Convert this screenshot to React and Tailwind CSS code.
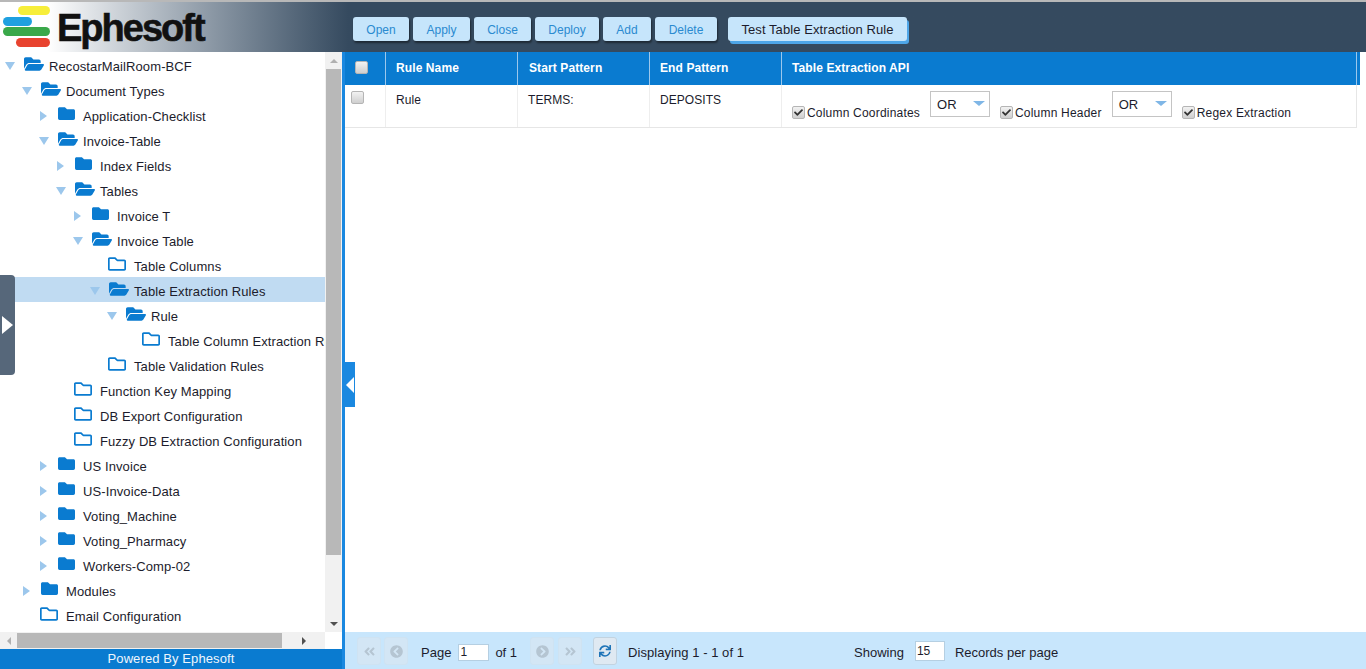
import React from "react";
import {
  FaFolder,
  FaFolderOpen,
  FaRegFolder,
  FaCheck,
  FaSync,
  FaAngleDoubleLeft,
  FaAngleDoubleRight,
  FaChevronCircleLeft,
  FaChevronCircleRight,
} from "react-icons/fa";

const treeRows = [
  { depth: 0, kind: "open", label: "RecostarMailRoom-BCF" },
  { depth: 1, kind: "open", label: "Document Types" },
  { depth: 2, kind: "closed", label: "Application-Checklist" },
  { depth: 2, kind: "open", label: "Invoice-Table" },
  { depth: 3, kind: "closed", label: "Index Fields" },
  { depth: 3, kind: "open", label: "Tables" },
  { depth: 4, kind: "closed", label: "Invoice T" },
  { depth: 4, kind: "open", label: "Invoice Table" },
  { depth: 5, kind: "leaf", label: "Table Columns" },
  { depth: 5, kind: "open", label: "Table Extraction Rules", selected: true },
  { depth: 6, kind: "open", label: "Rule" },
  { depth: 7, kind: "leaf", label: "Table Column Extraction Rules" },
  { depth: 5, kind: "leaf", label: "Table Validation Rules" },
  { depth: 3, kind: "leaf", label: "Function Key Mapping" },
  { depth: 3, kind: "leaf", label: "DB Export Configuration" },
  { depth: 3, kind: "leaf", label: "Fuzzy DB Extraction Configuration" },
  { depth: 2, kind: "closed", label: "US Invoice" },
  { depth: 2, kind: "closed", label: "US-Invoice-Data" },
  { depth: 2, kind: "closed", label: "Voting_Machine" },
  { depth: 2, kind: "closed", label: "Voting_Pharmacy" },
  { depth: 2, kind: "closed", label: "Workers-Comp-02" },
  { depth: 1, kind: "closed", label: "Modules" },
  { depth: 1, kind: "leaf", label: "Email Configuration" },
  { depth: 1, kind: "leaf", label: "" },
];

const toolbarButtons = [
  { label: "Open", width: "w-[56px]" },
  { label: "Apply", width: "w-[57px]" },
  { label: "Close", width: "w-[57px]" },
  { label: "Deploy", width: "w-[64px]" },
  { label: "Add", width: "w-[48px]" },
  { label: "Delete", width: "w-[62px]" },
];

const Checkbox = ({ checked }) => (
  <span className="flex h-[13px] w-[13px] shrink-0 items-center justify-center rounded-[2px] border border-[#b5b5b5] bg-gradient-to-b from-[#f2f2f2] to-[#cfcfcf]">
    {checked && <FaCheck className="text-[9px] text-[#333]" />}
  </span>
);

const OrSelect = () => (
  <span className="flex h-[26px] w-[60px] shrink-0 items-start justify-between border border-[#c4c4c4] bg-white pl-[6px] pr-[4px] pt-[3px] text-[13px]">
    OR
    <span className="mt-[6px] h-0 w-0 border-x-[6px] border-t-[5px] border-x-transparent border-t-[#7fb6e6]" />
  </span>
);

const TreeRow = ({ row }) => (
  <div
    className={`flex h-[25px] items-center whitespace-nowrap pt-[2px] text-[13px] tracking-[0.1px] text-[#1c1c2c] ${row.selected ? "bg-[#c0dbf2]" : ""}`}
    style={{ paddingLeft: 5 + row.depth * 17 }}
  >
    <span className="flex w-[19px] shrink-0 items-center">
      {row.kind === "open" && (
        <span className="h-0 w-0 border-x-[5px] border-t-[8px] border-x-transparent border-t-[#9cc7ec]" />
      )}
      {row.kind === "closed" && (
        <span className="ml-[1px] h-0 w-0 border-y-[5px] border-l-[7px] border-y-transparent border-l-[#9cc7ec]" />
      )}
    </span>
    <span className="mb-[4px] flex w-[25px] shrink-0 items-center text-[#0a7bd0]">
      {row.kind === "open" && <FaFolderOpen className="text-[20px]" />}
      {row.kind === "closed" && <FaFolder className="text-[17px]" />}
      {row.kind === "leaf" && <FaRegFolder className="-ml-[1px] text-[18px]" />}
    </span>
    <span className="pt-[2px]">{row.label}</span>
  </div>
);

const PagerButton = ({ children, faded = true }) => (
  <span
    className={`flex h-[28px] w-[24px] shrink-0 items-center justify-center rounded-[3px] border ${
      faded ? "border-[#cfe3f2] bg-[#d3e6f5] text-[#b5c5d2]" : "border-[#c2d3e0] bg-[#dfe9f2] text-[#1f74b8]"
    }`}
  >
    {children}
  </span>
);

const Triangle = ({ className }) => <span className={`h-0 w-0 ${className}`} />;

export default function App() {
  return (
    <div className="relative flex h-[669px] w-[1366px] flex-col overflow-hidden bg-white font-['Liberation_Sans',Arial,sans-serif] text-[#1c1c2c]">
      {/* Header */}
      <header className="flex h-[52px] shrink-0 items-start border-t-2 border-[#b8b8b8] bg-gradient-to-r from-white from-[3.5%] to-[#354a5f] to-[25.5%]">
        <div className="flex h-full w-[353px] shrink-0 items-start pl-[3px] pt-[3px]">
          <svg width="47" height="43" viewBox="0 0 47 43" className="shrink-0">
            <rect x="15" y="1" width="32" height="9" rx="4.5" fill="#f7ee3a" />
            <rect x="0" y="12" width="29" height="9" rx="4.5" fill="#1fa0e0" />
            <rect x="0" y="22" width="47" height="9" rx="4.5" fill="#3aa84a" />
            <rect x="13" y="33" width="34" height="9" rx="4.5" fill="#e8432f" />
          </svg>
          <span className="ml-[7px] mt-[1px] text-[38px] font-bold leading-[44px] tracking-[-2px] text-[#111] [-webkit-text-stroke:0.6px_#111]">
            Ephesoft
          </span>
        </div>
        <div className="flex items-start gap-1 pt-[15px]">
          {toolbarButtons.map((b) => (
            <button
              key={b.label}
              className={`h-[24px] rounded-[3px] bg-[#c6e5fb] pt-[2px] text-[12px] text-[#2a8ad0] shadow-[1px_2px_2px_rgba(0,0,0,0.45)] ${b.width}`}
            >
              {b.label}
            </button>
          ))}
          <button className="ml-[7px] h-[24px] w-[179px] rounded-[3px] bg-[#c6e5fb] pt-[2px] text-[13px] tracking-[0.08px] text-[#1c1c2c] shadow-[2px_3px_0_#4ea6e8]">
            Test Table Extraction Rule
          </button>
        </div>
      </header>

      <div className="flex min-h-0 flex-1">
        {/* Left tree panel */}
        <aside className="flex w-[342px] shrink-0 flex-col">
          <div className="flex min-h-0 flex-1">
            <div className="min-w-0 flex-1 overflow-hidden">
              {treeRows.map((row, i) => (
                <TreeRow key={i} row={row} />
              ))}
            </div>
            {/* vertical scrollbar */}
            <div className="flex w-[17px] shrink-0 flex-col items-center bg-[#f1f1f1]">
              <div className="flex h-[17px] items-center justify-center">
                <Triangle className="border-x-[4px] border-b-[4px] border-x-transparent border-b-[#b0b0b0]" />
              </div>
              <div className="h-[486px] w-[15px] bg-[#b8b8b8]" />
              <div className="flex flex-1 items-end justify-center pb-[6px]">
                <Triangle className="border-x-[4px] border-t-[4px] border-x-transparent border-t-[#505050]" />
              </div>
            </div>
          </div>
          {/* horizontal scrollbar */}
          <div className="flex h-[17px] shrink-0">
            <div className="flex w-[325px] items-center bg-[#f1f1f1]">
              <div className="flex w-[17px] justify-center">
                <Triangle className="border-y-[4px] border-r-[4px] border-y-transparent border-r-[#b0b0b0]" />
              </div>
              <div className="h-[15px] w-[265px] bg-[#b8b8b8]" />
              <div className="flex flex-1 justify-center">
                <Triangle className="border-y-[4px] border-l-[4px] border-y-transparent border-l-[#505050]" />
              </div>
            </div>
          </div>
          <div className="flex h-[20px] shrink-0 items-center justify-center bg-[#0a7bd0] text-[13px] tracking-[0.1px] text-[#eef6fd]">
            Powered By Ephesoft
          </div>
        </aside>

        {/* Main content */}
        <main className="flex min-w-0 flex-1 flex-col border-l-[3px] border-[#1a88e0]">
          <div className="min-h-0 flex-1">
            <div className="grid h-[33px] w-[1015px] grid-cols-[41px_132px_132px_132px_575px_3px] items-center bg-[#0a7bd0] text-[12px] font-bold tracking-[0.1px] text-white">
              <div className="flex h-full items-center justify-center border-r border-[#9cc7ec] pb-[3px] pr-[8px]">
                <Checkbox />
              </div>
              <div className="flex h-full items-center border-r border-[#9cc7ec] pb-[2px] pl-[10px]">Rule Name</div>
              <div className="flex h-full items-center border-r border-[#9cc7ec] pb-[2px] pl-[11px]">Start Pattern</div>
              <div className="flex h-full items-center border-r border-[#9cc7ec] pb-[2px] pl-[10px]">End Pattern</div>
              <div className="flex h-full items-center border-r border-[#9cc7ec] pb-[2px] pl-[10px]">Table Extraction API</div>
              <div />
            </div>
            <div className="grid h-[43px] w-[1012px] grid-cols-[41px_132px_132px_132px_575px] border-b border-[#e6e6e6] text-[12px] tracking-[0.05px]">
              <div className="border-r border-[#eeeeee] pl-[6px] pt-[6px]">
                <Checkbox />
              </div>
              <div className="border-r border-[#eeeeee] pl-[10px] pt-[6px]">Rule</div>
              <div className="border-r border-[#eeeeee] pl-[10px] pt-[6px]">TERMS:</div>
              <div className="border-r border-[#eeeeee] pl-[10px] pt-[6px]">DEPOSITS</div>
              <div className="flex items-start border-r border-[#e6e6e6] pl-[10px] pt-[6px]">
                <span className="mt-[12px] flex items-center gap-[2px]">
                  <Checkbox checked />
                  <span className="pt-[1px] text-[12px] tracking-[0.2px]">Column Coordinates</span>
                </span>
                <span className="ml-[10px]"><OrSelect /></span>
                <span className="ml-[10px] mt-[12px] flex items-center gap-[2px]">
                  <Checkbox checked />
                  <span className="pt-[1px] text-[12px] tracking-[0.2px]">Column Header</span>
                </span>
                <span className="ml-[10px]"><OrSelect /></span>
                <span className="ml-[10px] mt-[12px] flex items-center gap-[2px]">
                  <Checkbox checked />
                  <span className="pt-[1px] text-[12px] tracking-[0.2px]">Regex Extraction</span>
                </span>
              </div>
            </div>
          </div>

          {/* Pager */}
          <div className="flex h-[37px] shrink-0 items-center bg-[#c8e6fc] pl-[12px] pt-[1px] text-[13px]">
            <PagerButton><FaAngleDoubleLeft className="text-[13px]" /></PagerButton>
            <span className="ml-[3px]"><PagerButton><FaChevronCircleLeft className="text-[13px]" /></PagerButton></span>
            <span className="ml-[13px] pt-[3px]">Page</span>
            <span className="ml-[7px] mt-[2px] flex h-[17px] w-[31px] items-center border border-[#b5cfe2] bg-white pl-[1px] text-[12px]">1</span>
            <span className="ml-[6px] pt-[3px]">of 1</span>
            <span className="ml-[13px]"><PagerButton><FaChevronCircleRight className="text-[13px]" /></PagerButton></span>
            <span className="ml-[4px]"><PagerButton><FaAngleDoubleRight className="text-[13px]" /></PagerButton></span>
            <span className="ml-[11px] flex w-[25px]">
              <PagerButton faded={false}><FaSync className="text-[12px]" /></PagerButton>
            </span>
            <span className="ml-[10px] pt-[3px] tracking-[0.05px]">Displaying 1 - 1 of 1</span>
            <span className="ml-[110px] pt-[3px]">Showing</span>
            <span className="ml-[11px] flex h-[20px] w-[30px] items-start border border-[#b5cfe2] bg-white pl-[1px] text-[12px]">15</span>
            <span className="ml-[10px] pt-[3px]">Records per page</span>
          </div>
        </main>
      </div>

      {/* Sidebar collapse tabs sit over the content */}
      <div className="absolute left-0 top-[275px] flex h-[100px] w-[15px] items-center justify-center rounded-r-[4px] bg-[#56677a]">
        <Triangle className="border-y-[9px] border-l-[11px] border-y-transparent border-l-white" />
      </div>
      <div className="absolute left-[345px] top-[362px] flex h-[45px] w-[10px] items-center justify-center bg-[#1a88e0]">
        <Triangle className="border-y-[8px] border-r-[8px] border-y-transparent border-r-white" />
      </div>
    </div>
  );
}
